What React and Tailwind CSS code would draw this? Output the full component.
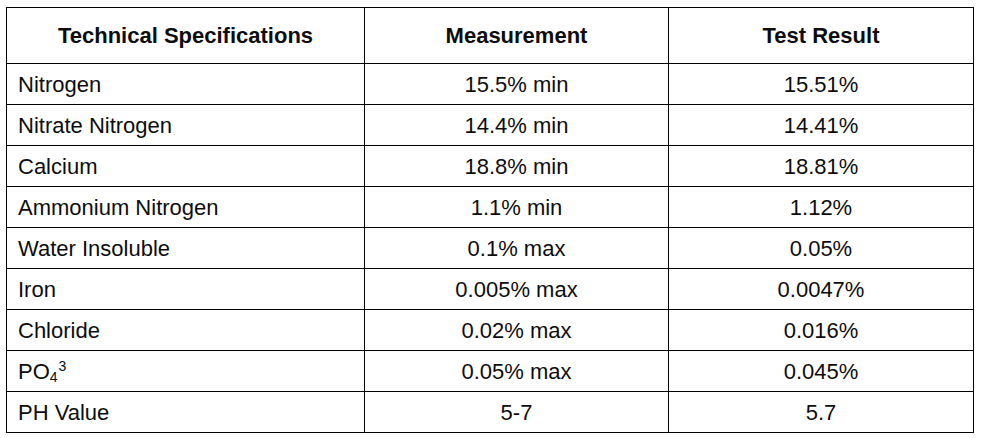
import React from "react";

const rows = [
  ["Nitrogen", "15.5% min", "15.51%"],
  ["Nitrate Nitrogen", "14.4% min", "14.41%"],
  ["Calcium", "18.8% min", "18.81%"],
  ["Ammonium Nitrogen", "1.1% min", "1.12%"],
  ["Water Insoluble", "0.1% max", "0.05%"],
  ["Iron", "0.005% max", "0.0047%"],
  ["Chloride", "0.02% max", "0.016%"],
  ["PO4", "0.05% max", "0.045%"],
  ["PH Value", "5-7", "5.7"],
];

export default function App() {
  return (
    <div
      className="w-[982px] h-[438px] bg-white pt-[7px] pl-[6px]"
      style={{ fontFamily: '"Liberation Sans", Arial, sans-serif' }}
    >
      <table className="border-collapse text-[#0d0d0d] text-[22px] leading-none">
        <colgroup>
          <col className="w-[358px]" />
          <col className="w-[304px]" />
          <col className="w-[305px]" />
        </colgroup>
        <thead>
          <tr className="h-[56px]">
            <th className="border border-black font-bold text-center p-0 pt-[1px]">Technical Specifications</th>
            <th className="border border-black font-bold text-center p-0 pt-[1px]">Measurement</th>
            <th className="border border-black font-bold text-center p-0 pt-[1px]">Test Result</th>
          </tr>
        </thead>
        <tbody>
          {rows.map((r) => (
            <tr key={r[0]} className="h-[41px]">
              <td className="border border-black pl-[11px] pt-[1px] text-left">
                {r[0] === "PO4" ? (
                  <span>
                    PO<sub className="text-[14px] relative top-[3px]">4</sub>
                    <sup className="text-[14px] relative -top-[8px] ml-[1px]">3</sup>
                  </span>
                ) : (
                  r[0]
                )}
              </td>
              <td className="border border-black text-center pt-[1px]">{r[1]}</td>
              <td className="border border-black text-center pt-[1px]">{r[2]}</td>
            </tr>
          ))}
        </tbody>
      </table>
    </div>
  );
}
